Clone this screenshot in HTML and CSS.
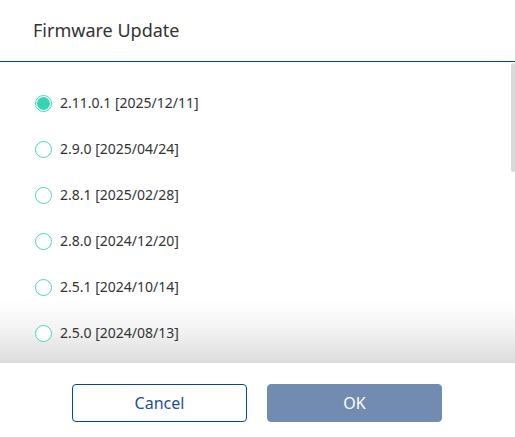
FILE: index.html
```html
<!DOCTYPE html>
<html>
<head>
<meta charset="utf-8">
<link rel="stylesheet" href="styles.css">
</head>
<body>
<div class="dialog">
  <div class="header"><h1 class="title">Firmware Update</h1></div>
  <div class="body">
    <div class="list">
      <label class="row"><span class="radio checked"></span><span class="label">2.11.0.1 [2025/12/11]</span></label>
      <label class="row"><span class="radio"></span><span class="label">2.9.0 [2025/04/24]</span></label>
      <label class="row"><span class="radio"></span><span class="label">2.8.1 [2025/02/28]</span></label>
      <label class="row"><span class="radio"></span><span class="label">2.8.0 [2024/12/20]</span></label>
      <label class="row"><span class="radio"></span><span class="label">2.5.1 [2024/10/14]</span></label>
      <label class="row"><span class="radio"></span><span class="label">2.5.0 [2024/08/13]</span></label>
    </div>
    <div class="scroll-thumb"></div>
  </div>
  <div class="footer">
    <button class="btn btn-cancel">Cancel</button>
    <button class="btn btn-ok">OK</button>
  </div>
</div>
</body>
</html>
```
FILE: styles.css
```css
* { box-sizing: border-box; }
html, body { margin: 0; padding: 0; background: #fff; }
body {
  width: 515px;
  height: 437px;
  overflow: hidden;
  font-family: "Noto Sans", "Open Sans", sans-serif;
  color: #333;
}
.dialog {
  display: flex;
  flex-direction: column;
  height: 437px;
}
.header {
  height: 62px;
  border-bottom: 1px solid #0047a5;
  display: flex;
  align-items: center;
  padding: 0 0 0 33px;
}
.title {
  margin: 0 0 2px 0;
  font-size: 18px;
  font-weight: 400;
  color: #333;
}
.body {
  position: relative;
  height: 301px;
  background: linear-gradient(to bottom, #fff 0, #fff 238px, #f3f3f3 268px, #dcdcdc 301px);
}
.list {
  height: 301px;
  overflow: hidden;
  padding: 18px 0 0 35px;
}
.scroll-thumb {
  position: absolute;
  top: 1px;
  right: 0;
  width: 4px;
  height: 109px;
  border-radius: 2px;
  background: #dadada;
}
.row {
  height: 46px;
  display: flex;
  align-items: center;
  gap: 8px;
  font-size: 14px;
}
.radio {
  width: 17px;
  height: 17px;
  border-radius: 50%;
  border: 1px solid #40d8ba;
  background: #fff;
  flex: none;
  display: flex;
  align-items: center;
  justify-content: center;
}
.radio.checked::after {
  content: "";
  width: 13px;
  height: 13px;
  border-radius: 50%;
  background: #38d3b5;
}
.label { line-height: 20px; }
.footer {
  height: 74px;
  display: flex;
  justify-content: center;
  gap: 20px;
  padding: 21px 1px 0 0;
}
.btn {
  width: 175px;
  height: 38px;
  border-radius: 4px;
  font-family: "Noto Sans", "Open Sans", sans-serif;
  font-size: 16px;
  cursor: pointer;
}
.btn-cancel {
  background: #fff;
  border: 1px solid #0047a5;
  color: #1a4fa0;
}
.btn-ok {
  background: #728bb0;
  border: 1px solid #728bb0;
  color: #fff;
}
```
